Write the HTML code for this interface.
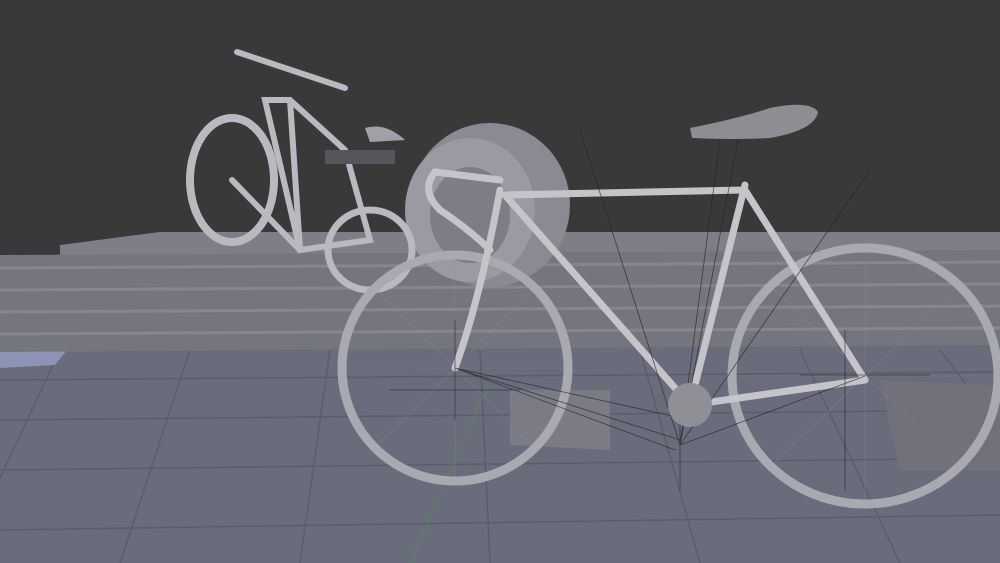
<!DOCTYPE html>
<html><head><style>html,body{margin:0;padding:0;background:#393939;overflow:hidden}svg{display:block}</style></head>
<body>
<svg width="1000" height="563" viewBox="0 0 1000 563" xmlns="http://www.w3.org/2000/svg">
<rect width="1000" height="563" fill="#393939"/>
<polygon points="0,330 1000,330 1000,563 0,563" fill="#6a6c7b"/>
<g stroke="#5b5d6b" stroke-width="1.5" fill="none">
<path d="M0,380 L1000,372 M0,420 L1000,410 M0,470 L1000,458 M0,530 L1000,515"/>
<path d="M60,350 L-40,563 M190,350 L120,563 M330,350 L300,563 M480,350 L490,563 M640,350 L700,563 M800,350 L900,563 M940,350 L1100,563"/>
</g>
<path d="M490,380 L410,563" stroke="#4f8a4f" stroke-width="1"/>
<polygon points="0,342 75,340 55,365 0,368" fill="#8d93b5"/>
<polygon points="60,245 160,232 1000,232 1000,250 60,262" fill="#7d7e88"/>
<polygon points="0,255 1000,250 1000,345 0,352" fill="#74757f"/>
<g stroke="#858690" stroke-width="3">
<line x1="0" y1="268" x2="1000" y2="262"/>
<line x1="0" y1="290" x2="1000" y2="284"/>
<line x1="0" y1="312" x2="1000" y2="306"/>
<line x1="0" y1="334" x2="1000" y2="328"/>
</g>
<polygon points="510,390 610,390 610,450 510,445" fill="#7a7b84"/>
<polygon points="880,380 1000,385 1000,470 900,470" fill="#70717b"/>
<ellipse cx="490" cy="205" rx="80" ry="82" fill="#8a8b92"/>
<ellipse cx="470" cy="210" rx="65" ry="72" fill="#9a9ba2"/>
<ellipse cx="470" cy="215" rx="40" ry="48" fill="#7c7d85"/>
<g fill="none" stroke="#b9b9bf" stroke-linecap="round">
<ellipse cx="232" cy="180" rx="42" ry="62" stroke-width="8"/>
<ellipse cx="370" cy="250" rx="42" ry="40" stroke-width="7"/>
<path d="M265,100 L300,250 L370,240 L345,150 L290,100 Z M232,180 L300,250 M300,250 L290,100 M237,52 L345,88" stroke-width="6"/>
</g>
<rect x="325" y="150" width="70" height="14" fill="#55565c"/>
<path d="M365,128 Q385,122 405,140 L370,142 Z" fill="#a0a0a6"/>
<g fill="none" stroke-linecap="round">
<g stroke="#8a8b92" stroke-width="0.6" opacity="0.6">
<path d="M455,255 L455,481 M342,368 L568,368 M375,288 L535,448 M375,448 L535,288 M865,248 L865,504 M732,376 L998,376 M770,285 L960,467 M770,467 L960,285"/>
</g>
<circle cx="455" cy="368" r="113" stroke="#a9aab0" stroke-width="9"/>
<ellipse cx="865" cy="376" rx="133" ry="128" stroke="#a9aab0" stroke-width="9"/>
<g stroke="#c4c4c9" stroke-width="7">
<path d="M505,195 L745,190 M505,195 L690,405 M745,185 L690,405 M690,405 L865,380 M745,190 L865,380"/>
<path d="M500,190 Q480,300 455,368" />
<path d="M500,180 L435,172 Q420,190 440,210 Q470,230 490,250"/>
</g>
<g stroke="#222" stroke-width="0.8" opacity="0.7">
<path d="M455,368 L680,440 M455,368 L690,420 M680,445 L865,376 M680,445 L580,130 M680,445 L720,140 M680,445 L870,170 M680,445 L740,130 M455,368 L675,450"/>
<path d="M455,320 L455,420 M390,390 L520,390 M845,330 L845,490 M800,375 L930,375 M680,420 L680,490"/>
</g>
</g>
<path d="M690,128 Q740,118 770,108 Q810,100 818,112 Q815,130 770,138 Q730,140 692,138 Z" fill="#8d8e94"/>
<circle cx="690" cy="405" r="22" fill="#8f9096"/>
</svg>
</body></html>
